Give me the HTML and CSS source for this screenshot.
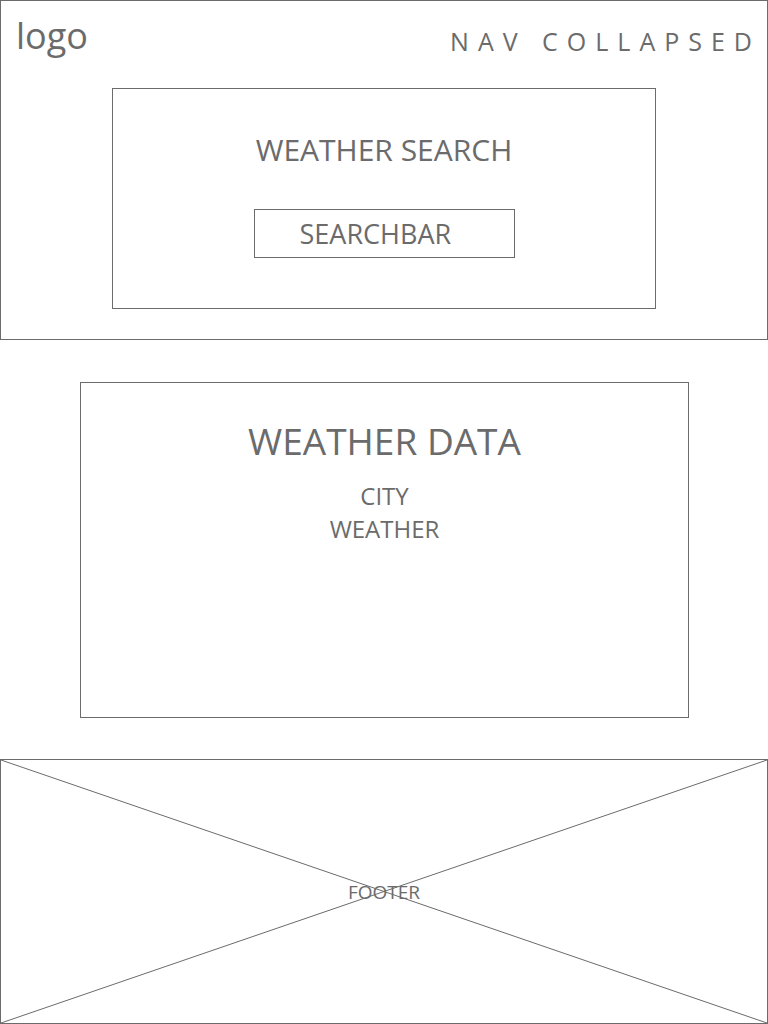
FILE: index.html
```html
<!DOCTYPE html>
<html>
<head>
<meta charset="utf-8">
<link rel="stylesheet" href="styles.css">
</head>
<body>
<header class="hero">
  <div class="topbar">
    <div class="logo">logo</div>
    <div class="nav">NAV COLLAPSED</div>
  </div>
  <section class="search">
    <h1 class="search-title">WEATHER SEARCH</h1>
    <div class="searchbar">SEARCHBAR</div>
  </section>
</header>
<main class="data">
  <h2 class="data-title">WEATHER DATA</h2>
  <div class="data-line">CITY</div>
  <div class="data-line">WEATHER</div>
</main>
<footer class="footer">
  <svg class="cross" viewBox="0 0 100 100" preserveAspectRatio="none">
    <line x1="0" y1="0" x2="100" y2="100" vector-effect="non-scaling-stroke"/>
    <line x1="100" y1="0" x2="0" y2="100" vector-effect="non-scaling-stroke"/>
  </svg>
  <span class="footer-label">FOOTER</span>
</footer>
</body>
</html>
```

FILE: styles.css
```css
* { box-sizing: border-box; }
html, body { margin: 0; padding: 0; background: #fff; }
body {
  width: 768px;
  font-family: "Open Sans", "Liberation Sans", sans-serif;
  color: #6b6b6b;
}
.hero {
  border: 1px solid #6b6b6b;
  height: 340px;
}
.topbar {
  display: flex;
  justify-content: space-between;
  align-items: flex-start;
  height: 87px;
}
.logo {
  font-size: 36px;
  line-height: 1;
  margin: 17px 0 0 15px;
  font-weight: 400;
}
.nav {
  font-size: 25px;
  letter-spacing: 9px;
  margin: 28px 6px 0 0;
  line-height: 1;
}
.search {
  width: 544px;
  height: 221px;
  margin: 0 auto;
  border: 1px solid #6b6b6b;
  display: flex;
  flex-direction: column;
  align-items: center;
}
.search-title {
  margin: 46px 0 0 0;
  font-size: 30px;
  font-weight: 400;
  line-height: 1;
}
.searchbar {
  margin-top: 44px;
  width: 261px;
  height: 49px;
  border: 1px solid #6b6b6b;
  font-size: 27px;
  line-height: 47px;
  padding-left: 45px;
}
.data {
  margin: 42px 0 0 80px;
  width: 609px;
  height: 336px;
  border: 1px solid #6b6b6b;
  display: flex;
  flex-direction: column;
  align-items: center;
}
.data-title {
  margin: 39px 0 20px 0;
  font-size: 37px;
  font-weight: 400;
  line-height: 1;
}
.data-line {
  font-size: 24px;
  line-height: 33px;
}
.footer {
  position: relative;
  margin-top: 41px;
  height: 265px;
  border: 1px solid #6b6b6b;
}
.cross {
  display: block;
  width: 100%;
  height: 100%;
}
.cross line {
  stroke: #6b6b6b;
  stroke-width: 1;
}
.footer-label {
  position: absolute;
  left: 0;
  right: 0;
  top: 119px;
  text-align: center;
  font-size: 19px;
}
```
